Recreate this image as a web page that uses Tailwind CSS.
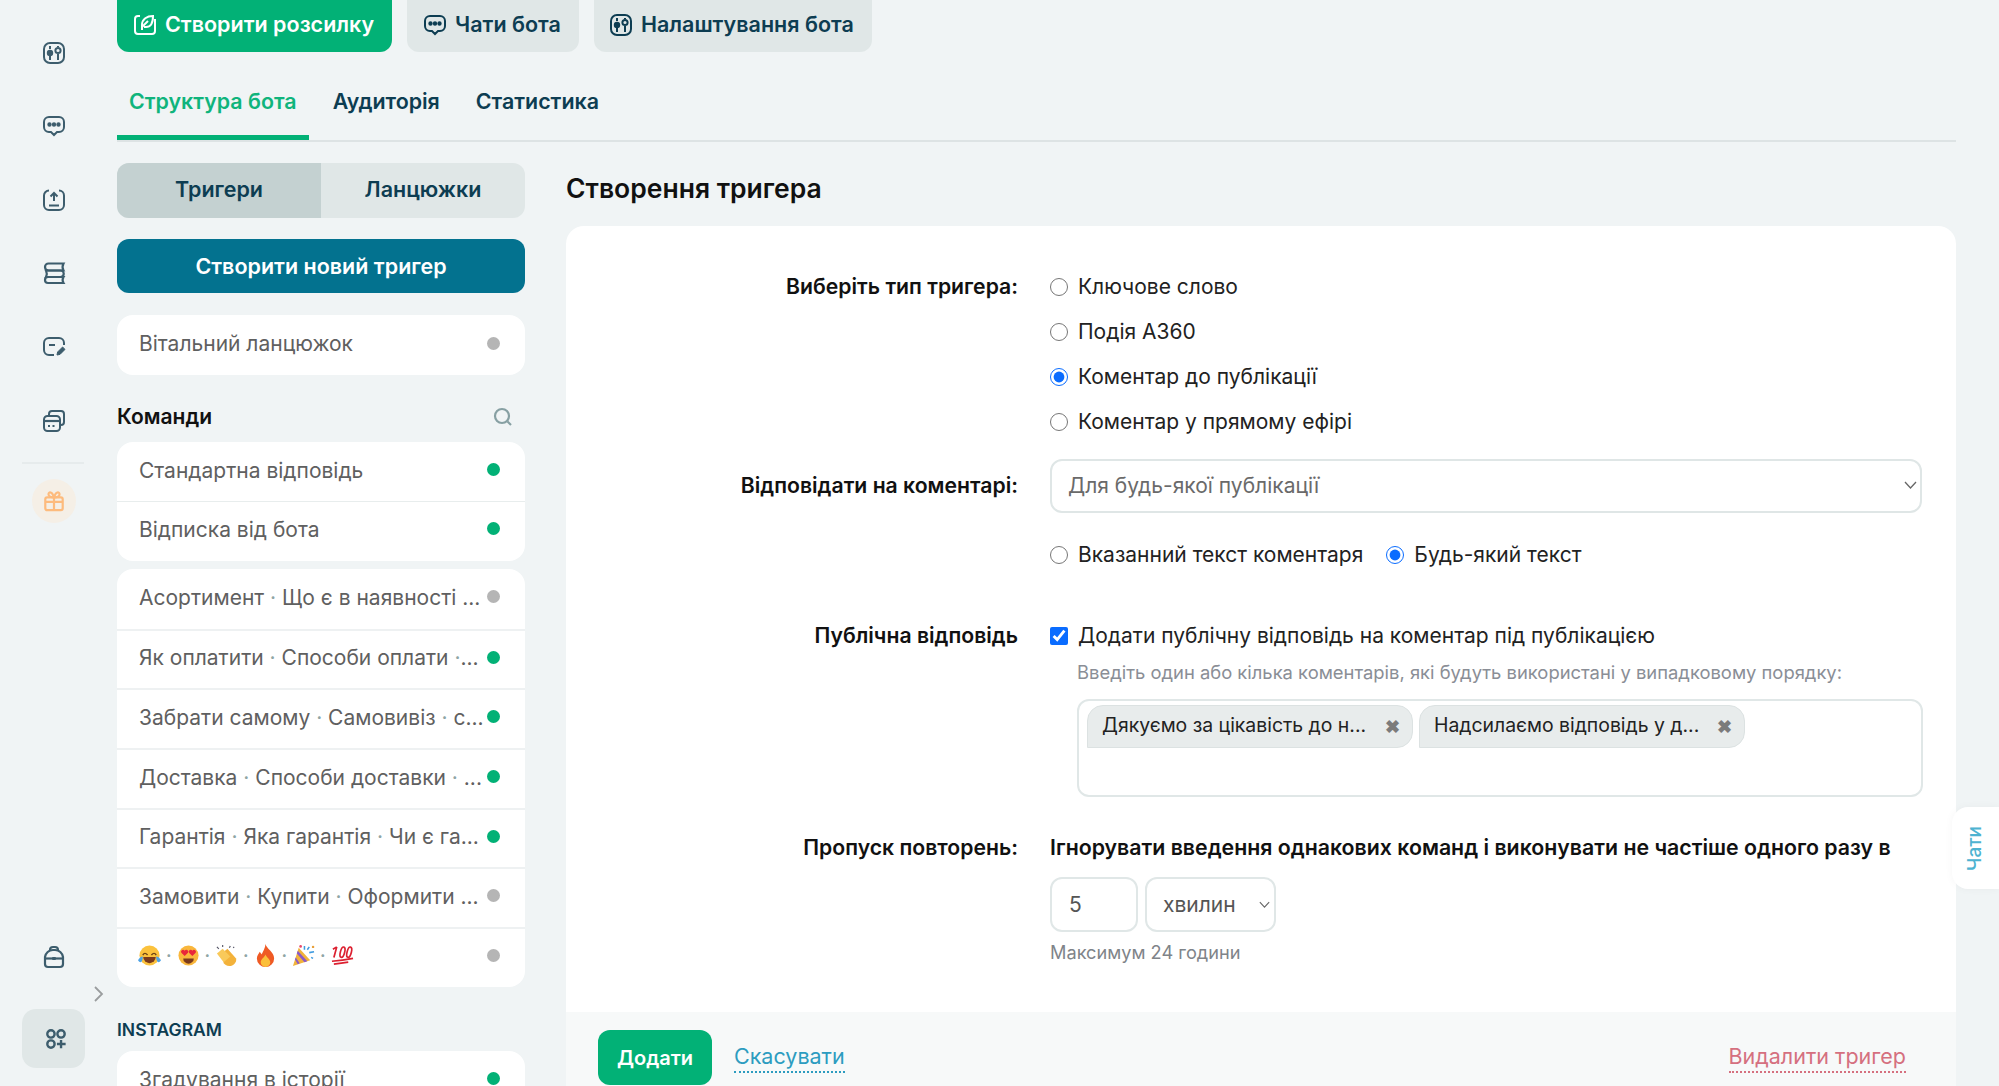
<!DOCTYPE html>
<html lang="uk">

<head>
  <meta charset="UTF-8">
  <title>Створення тригера</title>
  <script src="https://cdn.jsdelivr.net/npm/@tailwindcss/browser@4"></script>
</head>

<body class="bg-[#f0f4f5] font-['Inter','Noto_Sans',sans-serif] text-[21px] text-[#5f6060]">
  <div class="relative flex h-[1086px] overflow-hidden">

    <!-- Left icon rail -->
    <aside class="w-[117px] shrink-0 flex flex-col pt-[16px] pl-[22px] text-[#3d5d6d]">
      <div class="w-[64px] h-[73.6px] flex items-center justify-center">
        <svg class="w-[24px] h-[24px]" viewBox="0 0 24 24" fill="none" stroke="currentColor" stroke-width="2"><rect x="2" y="2" width="20" height="20" rx="6"/><path d="M8 5v3M8 15v4M16 5v1M16 13v6"/><circle cx="8" cy="12" r="2.200" fill="currentColor"/><circle cx="16" cy="9.500" r="2.600"/></svg>
      </div>
      <div class="w-[64px] h-[73.6px] flex items-center justify-center">
        <svg class="w-[24px] h-[24px]" viewBox="0 0 24 24" fill="none" stroke="currentColor" stroke-width="2"><path d="M7 3h10a5 5 0 0 1 5 5v5a5 5 0 0 1-5 5h-2l-3 3-3-3H7a5 5 0 0 1-5-5V8a5 5 0 0 1 5-5z"/><circle cx="7.500" cy="10.500" r="1.200" fill="currentColor"/><circle cx="12" cy="10.500" r="1.200" fill="currentColor"/><circle cx="16.500" cy="10.500" r="1.200" fill="currentColor"/></svg>
      </div>
      <div class="w-[64px] h-[73.6px] flex items-center justify-center">
        <svg class="w-[24px] h-[24px]" viewBox="0 0 24 24" fill="none" stroke="currentColor" stroke-width="2"><path d="M7 2.500A5 5 0 0 0 2 7.500v9.500a5 5 0 0 0 5 5h10a5 5 0 0 0 5-5V7.500a5 5 0 0 0-5-5"/><path d="M12 13V5M8.500 8.500 12 5l3.500 3.500M7 17.500h10"/></svg>
      </div>
      <div class="w-[64px] h-[73.6px] flex items-center justify-center -mt-[1px] mb-[1px]">
        <svg class="w-[24px] h-[24px]" viewBox="0 0 24 24" fill="none" stroke="currentColor" stroke-width="2.200"><path d="M21.500 2.500H6.500a3.500 3.500 0 0 0 0 7h15c-1.200-2.200-1.200-4.800 0-7z"/><path d="M4 9.500h14.500a3.200 3.200 0 0 1 0 6.500H4c1-2.100 1-4.400 0-6.500z"/><path d="M21.500 16H6a3 3 0 0 0 0 6h15.500c-1.200-2-1.200-4 0-6z"/></svg>
      </div>
      <div class="w-[64px] h-[73.6px] flex items-center justify-center">
        <svg class="w-[24px] h-[24px]" viewBox="0 0 24 24" fill="none" stroke="currentColor" stroke-width="2"><path d="M12 20H7a5 5 0 0 1-5-5V8a5 5 0 0 1 5-5h10a5 5 0 0 1 5 5v2"/><path d="M7 10h6"/><path d="m15 20 .600-3 5-5 2.400 2.400-5 5z" fill="currentColor" stroke-width="1"/></svg>
      </div>
      <div class="w-[64px] h-[73.6px] flex items-center justify-center">
        <svg class="w-[24px] h-[24px]" viewBox="0 0 24 24" fill="none" stroke="currentColor" stroke-width="2"><path d="M7 6V5a3 3 0 0 1 3-3h9a3 3 0 0 1 3 3v8a3 3 0 0 1-3 3h-1"/><rect x="2" y="7" width="16" height="15" rx="3.500"/><path d="M2 12h16" stroke-width="2.200"/><path d="M6 17h2M10.500 17h2"/></svg>
      </div>
      <div class="w-[62px] mt-[4px] border-t-2 border-[#e6ebec]"></div>
      <div class="w-[44px] h-[44px] ml-[10px] mt-[15px] rounded-full bg-[#f5efe6] flex items-center justify-center text-[#fdbb7d]">
        <svg class="w-[22px] h-[22px]" viewBox="0 0 24 24" fill="none" stroke="currentColor" stroke-width="2.400"><rect x="2.500" y="8" width="19" height="14" rx="2"/><path d="M12 8v14M2.500 13h19"/><path d="M12 8C9 8 6 7 6 4.500S10 1 12 8zM12 8c3 0 6-1 6-3.500S14 1 12 8z"/></svg>
      </div>

      <div class="mt-auto w-[64px] h-[44px] flex items-center justify-center">
        <svg class="w-[24px] h-[24px]" viewBox="0 0 24 24" fill="none" stroke="currentColor" stroke-width="2.200"><path d="M3 12a8 8 0 0 1 8-7h2a8 8 0 0 1 8 7v7a3 3 0 0 1-3 3H6a3 3 0 0 1-3-3z"/><path d="M8 6V5a3 3 0 0 1 3-3h2a3 3 0 0 1 3 3v1"/><path d="M3 13.500h18"/><rect x="10.300" y="12" width="3.400" height="3" fill="currentColor" stroke="none"/></svg>
      </div>
      <div class="h-[30px] w-[84px] flex items-center justify-end pr-[1px] text-[#9a9d9e]">
        <svg class="w-[12px] h-[18px]" viewBox="0 0 12 18" fill="none" stroke="currentColor" stroke-width="1.800"><path d="m2 2 7 7-7 7"/></svg>
      </div>
      <div class="w-[63px] h-[59px] mb-[18px] rounded-[14px] bg-[#e0e7e7] flex items-center justify-center">
        <svg class="w-[22px] h-[22px] ml-[4px]" viewBox="0 0 24 24" fill="none" stroke="currentColor" stroke-width="2.600"><circle cx="6.500" cy="6.500" r="4"/><circle cx="17.500" cy="6.500" r="4"/><circle cx="6.500" cy="17.500" r="4"/><path d="M17.500 13v9M13 17.500h9.500"/></svg>
      </div>
    </aside>

    <main class="flex-1 pr-[43px] min-w-0">
      <!-- Top buttons -->
      <div class="flex gap-[15px] h-[52px] font-semibold text-[21.500px]">
        <button class="flex items-center gap-[8px] pl-[16px] pr-[18px] pb-[3px] rounded-b-xl bg-[#02b176] text-white">
          <svg class="w-[24px] h-[24px]" viewBox="0 0 24 24" fill="none" stroke="currentColor" stroke-width="2"><path d="M7 3H5a3 3 0 0 0-3 3v12a3 3 0 0 0 3 3h14a3 3 0 0 0 3-3V6"/><path d="M9 17V12c0-6 5-9 11-9 0 6-2 11-7 11h-2"/><path d="M9 14 15 8"/></svg>
          Створити розсилку
        </button>
        <button class="flex items-center gap-[8px] pl-[16px] pr-[18px] pb-[3px] rounded-b-xl bg-[#e0e7e7] text-[#0d3d52]">
          <svg class="w-[24px] h-[24px]" viewBox="0 0 24 24" fill="none" stroke="currentColor" stroke-width="2"><path d="M7 3h10a5 5 0 0 1 5 5v5a5 5 0 0 1-5 5h-2l-3 3-3-3H7a5 5 0 0 1-5-5V8a5 5 0 0 1 5-5z"/><circle cx="7.500" cy="10.500" r="1.200" fill="currentColor"/><circle cx="12" cy="10.500" r="1.200" fill="currentColor"/><circle cx="16.500" cy="10.500" r="1.200" fill="currentColor"/></svg>
          Чати бота
        </button>
        <button class="flex items-center gap-[8px] pl-[15px] pr-[18px] pb-[3px] rounded-b-xl bg-[#e0e7e7] text-[#0d3d52]">
          <svg class="w-[24px] h-[24px]" viewBox="0 0 24 24" fill="none" stroke="currentColor" stroke-width="2"><rect x="2" y="2" width="20" height="20" rx="6"/><path d="M8 5v3M8 15v4M16 5v1M16 13v6"/><circle cx="8" cy="12" r="2.200" fill="currentColor"/><circle cx="16" cy="9.500" r="2.600"/></svg>
          Налаштування бота
        </button>
      </div>

      <!-- Tabs -->
      <div class="mt-[26px] h-[64px] flex gap-[12px] border-b-2 border-[#dde3e4] font-semibold text-[21.400px] text-[#0d3d52]">
        <a class="h-[62px] px-[12px] pt-[9px] leading-[28px] border-b-[5px] border-[#02b176] text-[#0fb47c]">Структура бота</a>
        <a class="h-[62px] px-[12px] pt-[9px] leading-[28px]">Аудиторія</a>
        <a class="h-[62px] px-[12px] pt-[9px] leading-[28px]">Статистика</a>
      </div>

      <div class="flex gap-[41px]">
        <!-- Left column: triggers list -->
        <section class="w-[408px] shrink-0 pt-[21px]">
          <div class="flex h-[55px] rounded-xl overflow-hidden bg-[#e0e7e7] font-semibold text-[21.500px] text-[#0d3d52]">
            <div class="w-[204px] pb-[2px] flex items-center justify-center bg-[#c4d1d1]">Тригери</div>
            <div class="w-[204px] pb-[2px] flex items-center justify-center">Ланцюжки</div>
          </div>
          <button class="mt-[21px] w-full h-[54px] rounded-xl bg-[#03728f] text-white font-semibold text-[21.500px]">Створити новий тригер</button>

          <div class="mt-[22px] bg-white rounded-2xl">
            <div class="h-[60px] flex items-center justify-between pl-[22px] pr-[25px] pb-[2px]">
              <span>Вітальний ланцюжок</span>
              <span class="w-[13px] h-[13px] rounded-full bg-[#b5b5b5] -mt-[1px]"></span>
            </div>
          </div>

          <div class="mt-[27px] h-[30px] flex items-center justify-between pr-[12px]">
            <span class="font-semibold text-[#111]">Команди</span>
            <svg class="w-[20px] h-[20px] text-[#87a0a3]" viewBox="0 0 20 20" fill="none" stroke="currentColor" stroke-width="2.200"><circle cx="9" cy="9" r="7"/><path d="m14.500 14.500 3.500 3.500"/></svg>
          </div>

          <div class="mt-[10px] bg-white rounded-2xl">
            <div class="h-[58.500px] flex items-center justify-between pl-[22px] pr-[25px] pb-[2px]">
              <span>Стандартна відповідь</span>
              <span class="w-[13px] h-[13px] rounded-full bg-[#02b176] -mt-[2px]"></span>
            </div>
            <div class="h-[60.500px] flex items-center justify-between pl-[22px] pr-[25px] pb-[3px] border-t border-[#e8eded]">
              <span>Відписка від бота</span>
              <span class="w-[13px] h-[13px] rounded-full bg-[#02b176] -mt-[2px]"></span>
            </div>
          </div>

          <div class="mt-[8px] bg-white rounded-2xl">
            <div class="h-[59.700px] flex items-center justify-between pl-[22px] pr-[25px] pb-[3px]">
              <span class="whitespace-nowrap">Асортимент <span class="text-[#8fa5a5]">·</span> Що є в наявності ...</span>
              <span class="w-[13px] h-[13px] rounded-full bg-[#b5b5b5] -mt-[2px]"></span>
            </div>
            <div class="h-[59.700px] flex items-center justify-between pl-[22px] pr-[25px] pb-[3px] border-t-2 border-[#eef1f2]">
              <span class="whitespace-nowrap">Як оплатити <span class="text-[#8fa5a5]">·</span> Способи оплати <span class="text-[#8fa5a5]">·</span>...</span>
              <span class="w-[13px] h-[13px] rounded-full bg-[#02b176] -mt-[2px]"></span>
            </div>
            <div class="h-[59.700px] flex items-center justify-between pl-[22px] pr-[25px] pb-[3px] border-t-2 border-[#eef1f2]">
              <span class="whitespace-nowrap">Забрати самому <span class="text-[#8fa5a5]">·</span> Самовивіз <span class="text-[#8fa5a5]">·</span> с...</span>
              <span class="w-[13px] h-[13px] rounded-full bg-[#02b176] -mt-[2px]"></span>
            </div>
            <div class="h-[59.700px] flex items-center justify-between pl-[22px] pr-[25px] pb-[3px] border-t-2 border-[#eef1f2]">
              <span class="whitespace-nowrap">Доставка <span class="text-[#8fa5a5]">·</span> Способи доставки <span class="text-[#8fa5a5]">·</span> ...</span>
              <span class="w-[13px] h-[13px] rounded-full bg-[#02b176] -mt-[2px]"></span>
            </div>
            <div class="h-[59.700px] flex items-center justify-between pl-[22px] pr-[25px] pb-[3px] border-t-2 border-[#eef1f2]">
              <span class="whitespace-nowrap">Гарантія <span class="text-[#8fa5a5]">·</span> Яка гарантія <span class="text-[#8fa5a5]">·</span> Чи є га...</span>
              <span class="w-[13px] h-[13px] rounded-full bg-[#02b176] -mt-[2px]"></span>
            </div>
            <div class="h-[59.700px] flex items-center justify-between pl-[22px] pr-[25px] pb-[3px] border-t-2 border-[#eef1f2]">
              <span class="whitespace-nowrap">Замовити <span class="text-[#8fa5a5]">·</span> Купити <span class="text-[#8fa5a5]">·</span> Оформити ...</span>
              <span class="w-[13px] h-[13px] rounded-full bg-[#b5b5b5] -mt-[2px]"></span>
            </div>
            <div class="h-[59.700px] flex items-center justify-between pl-[21px] pr-[25px] pb-[4px] border-t-2 border-[#eef1f2]">
              <span class="flex items-center text-[#8fa5a5]">
                <svg class="w-[23px] h-[23px]" viewBox="0 0 24 24"><circle cx="12" cy="12" r="10.500" fill="#fbc23d"/><path d="M5 11.500q2-3.500 5 0M14 11.500q3-3.500 5 0" fill="none" stroke="#6b4316" stroke-width="1.500"/><path d="M5.500 13.500h13a6.500 6.500 0 0 1-13 0z" fill="#7a3a1c"/><path d="M0 17q2-4 5-4 0 5-2 6-2 0-3-2zM24 17q-2-4-5-4 0 5 2 6 2 0 3-2z" fill="#4da3e6"/></svg>
                <span class="w-[15.500px] text-center">·</span>
                <svg class="w-[23px] h-[23px]" viewBox="0 0 24 24"><circle cx="12" cy="12" r="10.500" fill="#f9b73c"/><path d="M8 12.500 4.500 9a2 2 0 0 1 3.500-2 2 2 0 0 1 3.500 2zM16 12.500 12.500 9A2 2 0 0 1 16 7a2 2 0 0 1 3.500 2z" fill="#e9263a"/><path d="M6.500 15h11a5.500 5.500 0 0 1-11 0z" fill="#7a3a1c"/></svg>
                <span class="w-[15.500px] text-center">·</span>
                <svg class="w-[23px] h-[23px]" viewBox="0 0 24 24"><path d="M8 9 13 5l9 10c1 4-3 8-7 8-3 0-5-2-6-3z" fill="#f3b23a"/><path d="M2 10 8 5l8 8-7 6z" fill="#f9c95a"/><path d="M2 3 4 5M8 1v2M16 2l-1 2M20 3l-1 1" stroke="#556" stroke-width="1.200"/></svg>
                <span class="w-[15.500px] text-center">·</span>
                <svg class="w-[23px] h-[23px]" viewBox="0 0 24 24"><path d="M12 0c1 5 9 8 9 15a9 9 0 0 1-18 0c0-3 2-5 3-7 1 2 2 2 2 3 1-3 4-7 4-11z" fill="#ef5a24"/><path d="M12 11c1 3 5 5 5 8a5 5 0 0 1-10 0c0-3 4-5 5-8z" fill="#fbbf3a"/></svg>
                <span class="w-[15.500px] text-center">·</span>
                <svg class="w-[23px] h-[23px]" viewBox="0 0 24 24"><path d="M7 4 1 23l18-6z" fill="#f2b33a"/><path d="M5 10l8 9 3-1-10-11zM3 16l3 5 2-1-4-6z" fill="#8a5ac8"/><path d="M13 2v4M18 3l-2 3M23 8l-5 1M20 14l2 1" stroke="#3f9be0" stroke-width="1.600"/><circle cx="9" cy="2.500" r="1.400" fill="#e8476a"/><circle cx="22" cy="3" r="1.300" fill="#e8a03a"/></svg>
                <span class="w-[15.500px] text-center">·</span>
                <svg class="w-[23px] h-[23px]" viewBox="0 0 24 24" fill="none" stroke="#dc2030" stroke-width="1.800"><path d="M6 3 3 14M2 5.500 6 3"/><ellipse cx="12" cy="8.500" rx="2.200" ry="5.500" transform="rotate(15 12 8.500)"/><ellipse cx="19" cy="8.500" rx="2.200" ry="5.500" transform="rotate(15 19 8.500)"/><path d="M1 18q11-1 22-3M3 21q8-1 15-2"/></svg>
              </span>
              <span class="w-[13px] h-[13px] rounded-full bg-[#b5b5b5] -mt-[1px]"></span>
            </div>
          </div>

          <div class="mt-[31px] h-[24px] leading-[24px] text-[17.500px] font-semibold text-[#0d3d52]">INSTAGRAM</div>
          <div class="mt-[9px] bg-white rounded-2xl">
            <div class="h-[60px] flex items-center justify-between pl-[22px] pr-[25px] pb-[2px]">
              <span>Згадування в історії</span>
              <span class="w-[13px] h-[13px] rounded-full bg-[#02b176] -mt-[2px]"></span>
            </div>
          </div>
        </section>

        <!-- Right column: form -->
        <section class="flex-1 min-w-0 pt-[28px]">
          <h2 class="h-[36px] leading-[36px] text-[26.500px] font-semibold text-[#111]">Створення тригера</h2>
          <div class="mt-[20px] bg-white rounded-t-[18px]">
            <div class="pt-[38px] pr-[33px] text-[#222]">

              <div class="flex gap-[32px] h-[45px] items-center">
                <label class="w-[452px] text-right font-semibold text-[21.200px] text-[#111]">Виберіть тип тригера:</label>
                <label class="flex items-center gap-[10px]"><input type="radio" name="kind" class="w-[18px] h-[18px] m-0 accent-[#0a6cff]">Ключове слово</label>
              </div>
              <div class="flex gap-[32px] h-[45px] items-center">
                <div class="w-[452px]"></div>
                <label class="flex items-center gap-[10px]"><input type="radio" name="kind" class="w-[18px] h-[18px] m-0 accent-[#0a6cff]">Подія А360</label>
              </div>
              <div class="flex gap-[32px] h-[45px] items-center">
                <div class="w-[452px]"></div>
                <label class="flex items-center gap-[10px]"><input type="radio" name="kind" checked class="w-[18px] h-[18px] m-0 accent-[#0a6cff]">Коментар до публікації</label>
              </div>
              <div class="flex gap-[32px] h-[45px] items-center">
                <div class="w-[452px]"></div>
                <label class="flex items-center gap-[10px]"><input type="radio" name="kind" class="w-[18px] h-[18px] m-0 accent-[#0a6cff]">Коментар у прямому ефірі</label>
              </div>

              <div class="mt-[15px] flex gap-[32px] h-[54px] items-center">
                <label class="w-[452px] text-right font-semibold text-[21.200px] text-[#111]">Відповідати на коментарі:</label>
                <div class="relative w-[872px]">
                  <select class="w-full h-[54px] pl-[16px] rounded-xl border-2 border-[#dfe6e6] bg-white text-[#6a6a6a] appearance-none">
                    <option>Для будь-якої публікації</option>
                  </select>
                  <svg class="absolute right-[5px] top-[22px] w-[13px] h-[9px] text-[#666]" viewBox="0 0 13 9" fill="none" stroke="currentColor" stroke-width="1.300"><path d="m1 1 5.500 6L12 1"/></svg>
                </div>
              </div>

              <div class="mt-[27px] flex gap-[32px] h-[30px] items-center">
                <div class="w-[452px]"></div>
                <label class="flex items-center gap-[10px]"><input type="radio" name="match" class="w-[18px] h-[18px] m-0 accent-[#0a6cff]">Вказанний текст коментаря</label>
                <label class="flex items-center gap-[10px] -ml-[9px]"><input type="radio" name="match" checked class="w-[18px] h-[18px] m-0 accent-[#0a6cff]">Будь-який текст</label>
              </div>

              <div class="mt-[51px] flex gap-[32px] h-[30px] items-center">
                <label class="w-[452px] text-right font-semibold text-[21.200px] text-[#111]">Публічна відповідь</label>
                <label class="flex items-center gap-[10px]"><input type="checkbox" checked class="w-[18px] h-[18px] m-0 accent-[#0a6cff]">Додати публічну відповідь на коментар під публікацією</label>
              </div>

              <div class="pl-[511px]">
                <p class="mt-[9px] h-[24px] leading-[24px] text-[18.400px] text-[#8a8e96]">Введіть один або кілька коментарів, які будуть використані у випадковому порядку:</p>
                <div class="mt-[15px] h-[98px] rounded-xl border-2 border-[#e0e7e7] pl-[8px] pt-[4px] flex items-start gap-[6px]">
                  <div class="w-[326px] h-[43px] flex items-center justify-between pl-[14px] pr-[12px] pb-[1px] rounded-t-2xl rounded-br-2xl bg-[#e8ecec] border border-[#dce2e2] text-[19.400px] text-[#222]">
                    <span class="whitespace-nowrap">Дякуємо за цікавість до н...</span>
                    <span class="text-[#7b7b7b] font-bold text-[18px]">✖</span>
                  </div>
                  <div class="w-[326px] h-[43px] flex items-center justify-between pl-[14px] pr-[12px] pb-[1px] rounded-t-2xl rounded-br-2xl bg-[#e8ecec] border border-[#dce2e2] text-[19.400px] text-[#222]">
                    <span class="whitespace-nowrap">Надсилаємо відповідь у д...</span>
                    <span class="text-[#7b7b7b] font-bold text-[18px]">✖</span>
                  </div>
                </div>
              </div>

              <div class="mt-[36px] flex gap-[32px] h-[30px] items-center">
                <label class="w-[452px] text-right font-semibold text-[21.200px] text-[#111]">Пропуск повторень:</label>
                <span class="font-semibold text-[21.300px] text-[#111] whitespace-nowrap">Ігнорувати введення однакових команд і виконувати не частіше одного разу в</span>
              </div>

              <div class="pl-[484px]">
                <div class="mt-[14px] flex gap-[7px]">
                  <input value="5" class="w-[88px] h-[55px] pl-[17px] rounded-xl border-2 border-[#e0e7e7] text-[#555]">
                  <div class="relative w-[131px]">
                    <select class="w-full h-[55px] pl-[16px] rounded-xl border-2 border-[#e0e7e7] bg-white text-[#555] appearance-none">
                      <option>хвилин</option>
                    </select>
                    <svg class="absolute right-[6px] top-[24px] w-[11px] h-[8px] text-[#666]" viewBox="0 0 13 9" fill="none" stroke="currentColor" stroke-width="1.300"><path d="m1 1 5.500 6L12 1"/></svg>
                  </div>
                </div>
                <p class="mt-[8px] h-[24px] leading-[24px] text-[18.200px] text-[#7f8489]">Максимум 24 години</p>
              </div>
            </div>

            <!-- Form footer -->
            <div class="mt-[48px] h-[74px] pt-[18px] pl-[32px] pr-[50px] bg-[#f7f9f9] flex items-start justify-between">
              <div class="flex items-start gap-[22px]">
                <button class="w-[114px] h-[55px] rounded-xl bg-[#02b176] text-white font-semibold text-[20px]">Додати</button>
                <a class="mt-[11px] leading-[30px] text-[21.500px] text-[#2c9cc0] border-b-2 border-dotted border-[#2c9cc0]">Скасувати</a>
              </div>
              <a class="mt-[11px] leading-[30px] text-[21.500px] text-[#d5707f] border-b-2 border-dotted border-[#d5707f]">Видалити тригер</a>
            </div>
          </div>
        </section>
      </div>
    </main>

    <!-- Floating chats tab -->
    <div class="absolute right-0 top-[807px] w-[47px] h-[82px] rounded-l-2xl bg-white shadow-[0_0_8px_rgba(0,0,0,0.04)] flex items-center justify-center">
      <span class="[writing-mode:vertical-rl] rotate-180 text-[19px] font-medium text-[#4eb3d1]">Чати</span>
    </div>
  </div>
</body>

</html>
